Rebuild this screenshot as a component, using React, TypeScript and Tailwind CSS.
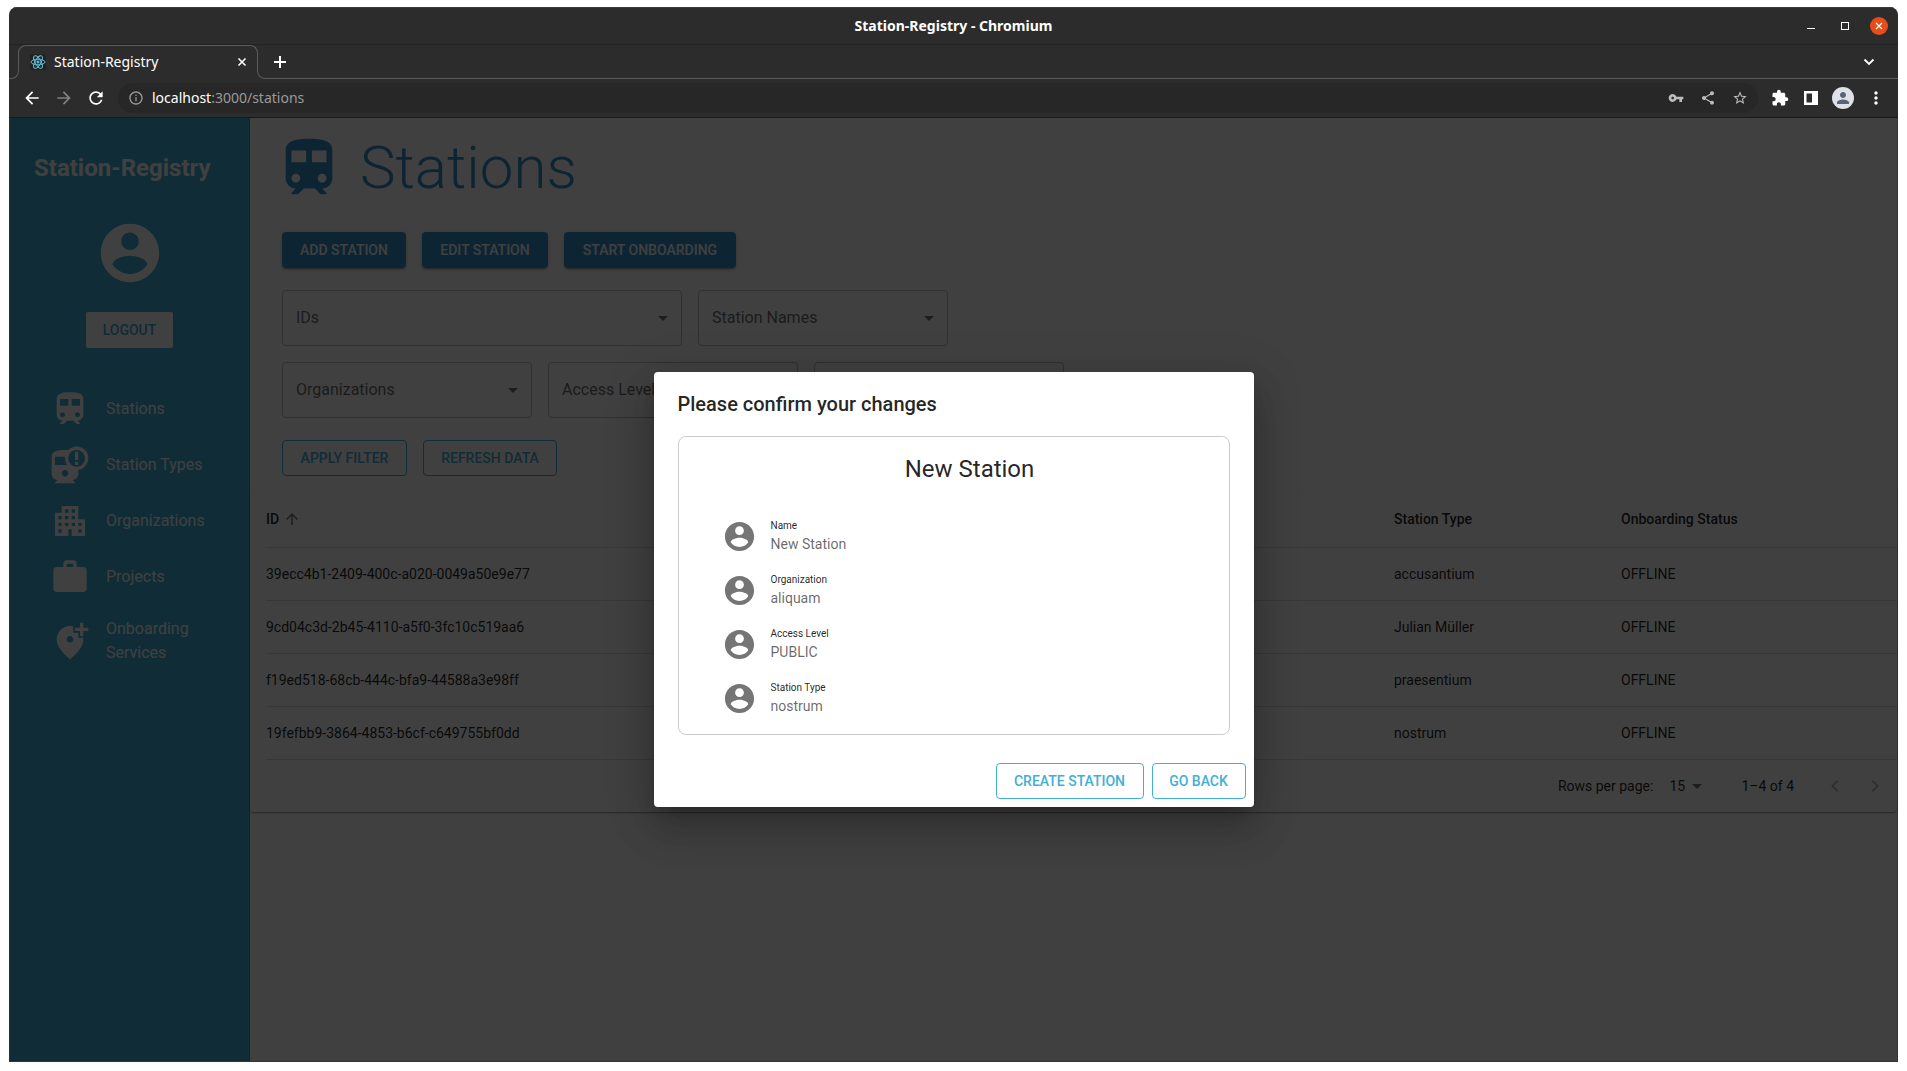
import { useState } from 'react'
import {
  MdAddLocationAlt, MdApartment, MdArrowBack, MdArrowDropDown, MdArrowForward, MdArrowUpward,
  MdChevronLeft, MdChevronRight, MdExtension, MdInfoOutline, MdMoreVert, MdPerson, MdRailwayAlert,
  MdRefresh, MdShare, MdStarBorder, MdTrain, MdVpnKey, MdWork,
} from 'react-icons/md'

const navItems = [
  { label: 'Stations', icon: MdTrain },
  { label: 'Station Types', icon: MdRailwayAlert },
  { label: 'Organizations', icon: MdApartment },
  { label: 'Projects', icon: MdWork },
  { label: 'Onboarding Services', icon: MdAddLocationAlt },
]

const stations = [
  { id: '39ecc4b1-2409-400c-a020-0049a50e9e77', type: 'accusantium', status: 'OFFLINE' },
  { id: '9cd04c3d-2b45-4110-a5f0-3fc10c519aa6', type: 'Julian Müller', status: 'OFFLINE' },
  { id: 'f19ed518-68cb-444c-bfa9-44588a3e98ff', type: 'praesentium', status: 'OFFLINE' },
  { id: '19fefbb9-3864-4853-b6cf-c649755bf0dd', type: 'nostrum', status: 'OFFLINE' },
]

const changes = [
  { label: 'Name', value: 'New Station' },
  { label: 'Organization', value: 'aliquam' },
  { label: 'Access Level', value: 'PUBLIC' },
  { label: 'Station Type', value: 'nostrum' },
]

function AccountCircle({ className }: { className: string }) {
  return (
    <svg viewBox="0 0 24 24" fill="currentColor" className={className} aria-hidden="true">
      <path d="M12 2C6.48 2 2 6.48 2 12s4.48 10 10 10 10-4.48 10-10S17.52 2 12 2zm0 3c1.66 0 3 1.34 3 3s-1.34 3-3 3-3-1.34-3-3 1.34-3 3-3zm0 14.2c-2.5 0-4.71-1.28-6-3.22.03-1.99 4-3.08 6-3.08 1.99 0 5.97 1.09 6 3.08-1.29 1.94-3.5 3.22-6 3.22z" />
    </svg>
  )
}

function ReactLogo() {
  return (
    <span className="flex size-4 items-center justify-center rounded-xs bg-[#222]">
      <svg viewBox="0 0 24 24" fill="none" stroke="#61c5e0" strokeWidth="1.4" className="size-4" aria-hidden="true">
        <ellipse cx="12" cy="12" rx="10.5" ry="4.2" />
        <ellipse cx="12" cy="12" rx="10.5" ry="4.2" transform="rotate(60 12 12)" />
        <ellipse cx="12" cy="12" rx="10.5" ry="4.2" transform="rotate(120 12 12)" />
        <circle cx="12" cy="12" r="1.6" fill="#61c5e0" />
      </svg>
    </span>
  )
}

function TitleBar() {
  return (
    <div className="grid h-[37px] grid-cols-[1fr_auto_1fr] items-center border-t border-[#3a3a3a]">
      <span />
      <h1 className="text-sm font-bold text-white">Station-Registry - Chromium</h1>
      <div className="flex items-center justify-end gap-4 pr-[10px] text-white">
        <button aria-label="Minimize" className="flex size-[18px] items-center justify-center">
          <svg viewBox="0 0 18 18" className="size-[18px]"><path d="M5 11.5h8" stroke="currentColor" /></svg>
        </button>
        <button aria-label="Maximize" className="flex size-[18px] items-center justify-center">
          <span className="size-2 border border-white" />
        </button>
        <button aria-label="Close" className="flex size-[18px] items-center justify-center rounded-full bg-[#e64d1a]">
          <svg viewBox="0 0 18 18" className="size-[18px]"><path d="M6 6l6 6M12 6l-6 6" stroke="currentColor" strokeWidth="1.2" /></svg>
        </button>
      </div>
    </div>
  )
}

function TabStrip() {
  return (
    <div className="flex h-[35px] border-t border-[#232323] text-white">
      <div className="flex w-[10px] items-end">
        <span className="h-[9px] flex-1 rounded-br-lg border-r border-b border-[#5c5c5c]" />
      </div>
      <div className="-ml-px flex h-[25px] w-60 items-end rounded-t-lg border-x border-t border-[#5c5c5c] pr-[7px] pl-[11px]">
        <ReactLogo />
        <span className="ml-2 flex-1 text-sm leading-4">Station-Registry</span>
        <button aria-label="Close tab" className="flex size-4 items-center justify-center">
          <svg viewBox="0 0 16 16" className="size-4"><path d="M4.5 4.5l7 7M11.5 4.5l-7 7" stroke="currentColor" strokeWidth="1.6" /></svg>
        </button>
      </div>
      <div className="-ml-px flex flex-1 flex-col">
        <div className="flex h-[25px] items-end justify-between pr-[21px] pl-[15px]">
          <button aria-label="New tab">
            <svg viewBox="0 0 16 16" className="size-4"><path d="M8 2v12M2 8h12" stroke="currentColor" strokeWidth="2" /></svg>
          </button>
          <button aria-label="Search tabs">
            <svg viewBox="0 0 16 16" className="size-4"><path d="M3.5 5.5L8 10l4.500-4.500" fill="none" stroke="currentColor" strokeWidth="1.8" /></svg>
          </button>
        </div>
        <span className="h-[9px] rounded-bl-lg border-b border-l border-[#5c5c5c]" />
      </div>
    </div>
  )
}

function Toolbar() {
  return (
    <div className="flex h-[39px] items-center border-b border-[#191919] pl-[13px] text-white">
      <div className="flex gap-3">
        <button aria-label="Back"><MdArrowBack className="size-5" /></button>
        <button aria-label="Forward" className="text-[#808080]"><MdArrowForward className="size-5" /></button>
        <button aria-label="Reload"><MdRefresh className="size-5" /></button>
      </div>
      <div className="ml-3 flex h-[30px] flex-1 items-center rounded-full bg-[#272727] px-[10px] text-[#bdbdbd]">
        <MdInfoOutline className="size-4 text-[#9a9a9a]" />
        <a href="#stations" className="ml-2 flex-1 text-sm text-[#9a9a9a]">
          <span className="text-white">localhost</span>:3000/stations
        </a>
        <div className="flex gap-4">
          <button aria-label="Passwords"><MdVpnKey className="size-4" /></button>
          <button aria-label="Share"><MdShare className="size-4" /></button>
          <button aria-label="Bookmark"><MdStarBorder className="size-4" /></button>
        </div>
      </div>
      <div className="flex items-center gap-3 pr-3 pl-3">
        <button aria-label="Extensions"><MdExtension className="size-5 p-px" /></button>
        <button aria-label="Side panel">
          <svg viewBox="0 0 18 18" className="size-[18px]"><path d="M2 2h14v14H2zM4.500 4.500v9H10v-9z" fill="currentColor" fillRule="evenodd" /></svg>
        </button>
        <button aria-label="Profile" className="flex size-[22px] items-center justify-center rounded-full bg-[#dee1e6]">
          <MdPerson className="size-[18px] text-[#56637a]" />
        </button>
        <button aria-label="Menu"><MdMoreVert className="size-5" /></button>
      </div>
    </div>
  )
}

function Sidebar() {
  return (
    <aside className="flex w-60 shrink-0 flex-col items-center border-r border-black/12 bg-[#42b0d5] pt-[34px] text-white">
      <h2 className="self-start pl-6 text-2xl font-bold">Station-Registry</h2>
      <AccountCircle className="mt-[34px] size-[70px]" />
      <button className="mt-6 h-9 w-[87px] rounded-xs bg-white text-sm font-medium text-[#42b0d5]">LOGOUT</button>
      <nav className="mt-[33px] w-full">
        {navItems.map(({ label, icon: Icon }) => (
          <a key={label} href="#nav" className="flex items-center gap-4 py-2 pr-10 pl-10">
            <Icon className="size-10 shrink-0" />
            <span className="py-1 text-base">{label}</span>
          </a>
        ))}
      </nav>
    </aside>
  )
}

function FilterSelect({ label, text, className }: { label: string; text?: string; className: string }) {
  return (
    <div className={`relative h-14 ${className}`}>
      <select aria-label={label} className="size-full appearance-none rounded border border-black/25 px-[13px] text-base text-black/60">
        <option>{text}</option>
      </select>
      <MdArrowDropDown className="pointer-events-none absolute top-4 right-[7px] size-6 text-black/54" />
    </div>
  )
}

const contained = 'h-9 rounded bg-[#3494cc] text-sm font-medium text-white shadow-[0_3px_1px_-2px_rgba(0,0,0,0.2),0_2px_2px_rgba(0,0,0,0.14),0_1px_5px_rgba(0,0,0,0.12)]'
const outlined = 'h-9 rounded border border-[#42b0d5] text-sm font-medium text-[#42b0d5]'

function StationsPage() {
  return (
    <main className="min-w-0 flex-1 bg-white pt-[14px]">
      <div className="flex items-center gap-4 px-6 text-[#3494cc]">
        <MdTrain className="size-[70px]" />
        <h2 className="text-6xl leading-[72px] font-light">Stations</h2>
      </div>

      <div className="px-8 pt-7">
        <div className="flex gap-4">
          <button className={`${contained} w-[124px]`}>ADD STATION</button>
          <button className={`${contained} w-[126px]`}>EDIT STATION</button>
          <button className={`${contained} w-[172px]`}>START ONBOARDING</button>
        </div>
        <div className="mt-[22px] flex gap-4">
          <FilterSelect label="IDs" text="IDs" className="w-[400px]" />
          <FilterSelect label="Station Names" text="Station Names" className="w-[250px]" />
        </div>
        <div className="mt-4 flex gap-4">
          <FilterSelect label="Organizations" text="Organizations" className="w-[250px]" />
          <FilterSelect label="Access Level" text="Access Level" className="w-[250px]" />
          <FilterSelect label="Station Types" className="w-[250px]" />
        </div>
        <div className="mt-[22px] flex gap-4">
          <button className={`${outlined} w-[125px]`}>APPLY FILTER</button>
          <button className={`${outlined} w-[134px]`}>REFRESH DATA</button>
        </div>
      </div>

      <section className="mt-[14px] rounded pl-4 shadow-[0_2px_1px_-1px_rgba(0,0,0,0.2),0_1px_1px_rgba(0,0,0,0.14),0_1px_3px_rgba(0,0,0,0.12)]">
        <table className="w-full table-fixed text-left text-sm text-black/87">
          <thead>
            <tr className="h-[57px] border-b border-[#e0e0e0]">
              <th className="pt-[2px] font-medium">
                <button className="flex items-center gap-1">ID <MdArrowUpward className="size-[18px] text-black/54" /></button>
              </th>
              <th className="w-[227px] pt-[2px] font-medium">Station Type</th>
              <th className="w-[276px] pt-[2px] font-medium">Onboarding Status</th>
            </tr>
          </thead>
          <tbody>
            {stations.map(s => (
              <tr key={s.id} className="h-[53px] border-b border-[#e0e0e0]">
                <td>{s.id}</td>
                <td>{s.type}</td>
                <td>{s.status}</td>
              </tr>
            ))}
          </tbody>
        </table>
        <div className="flex h-[52px] items-center justify-end pr-[10px] text-sm text-black/87">
          <label htmlFor="rows">Rows per page:</label>
          <div className="relative ml-4">
            <select id="rows" className="h-6 w-10 appearance-none">
              <option>15</option>
            </select>
            <MdArrowDropDown className="pointer-events-none absolute top-0 right-0 size-6 text-black/54" />
          </div>
          <span className="ml-8">1–4 of 4</span>
          <div className="ml-[29px] flex gap-4 text-black/26">
            <button aria-label="Previous page"><MdChevronLeft className="size-6" /></button>
            <button aria-label="Next page"><MdChevronRight className="size-6" /></button>
          </div>
        </div>
      </section>
    </main>
  )
}

function ConfirmDialog({ onClose }: { onClose: () => void }) {
  return (
    <div className="absolute inset-0 flex items-center justify-center bg-black/75">
      <div
        role="dialog"
        aria-labelledby="confirm-title"
        className="w-[600px] rounded bg-white text-black/87 shadow-[0_11px_15px_-7px_rgba(0,0,0,0.2),0_24px_38px_3px_rgba(0,0,0,0.14),0_9px_46px_8px_rgba(0,0,0,0.12)]"
      >
        <h2 id="confirm-title" className="px-6 py-4 text-xl leading-8 font-medium">Please confirm your changes</h2>
        <div className="px-6 pb-5">
          <div className="rounded-lg border border-black/20 pt-4 pb-[9px]">
            <h3 className="pl-8 text-center text-2xl">New Station</h3>
            <ul className="mt-6 pl-[43px]">
              {changes.map(c => (
                <li key={c.label} className="flex h-[54px] items-center gap-[14px]">
                  <AccountCircle className="size-[35px] text-black/54" />
                  <div>
                    <p className="text-[10px] leading-4">{c.label}</p>
                    <p className="text-sm text-black/60">{c.value}</p>
                  </div>
                </li>
              ))}
            </ul>
          </div>
        </div>
        <div className="flex justify-end gap-2 p-2">
          <button className={`${outlined} w-[148px]`}>CREATE STATION</button>
          <button className={`${outlined} w-[94px]`} onClick={onClose}>GO BACK</button>
        </div>
      </div>
    </div>
  )
}

export default function App() {
  const [open, setOpen] = useState(true)

  return (
    <div className="flex min-h-screen flex-col bg-white px-[9px] pt-[7px] pb-[9px]">
      <div className="flex flex-1 flex-col overflow-hidden rounded-t-lg bg-[#2c2c2c] font-['Noto_Sans',sans-serif]">
        <TitleBar />
        <TabStrip />
        <Toolbar />
        <div className="relative flex flex-1 border-x border-b border-[#333] font-[Roboto,sans-serif]">
          <Sidebar />
          <StationsPage />
          {open && <ConfirmDialog onClose={() => setOpen(false)} />}
        </div>
      </div>
    </div>
  )
}
